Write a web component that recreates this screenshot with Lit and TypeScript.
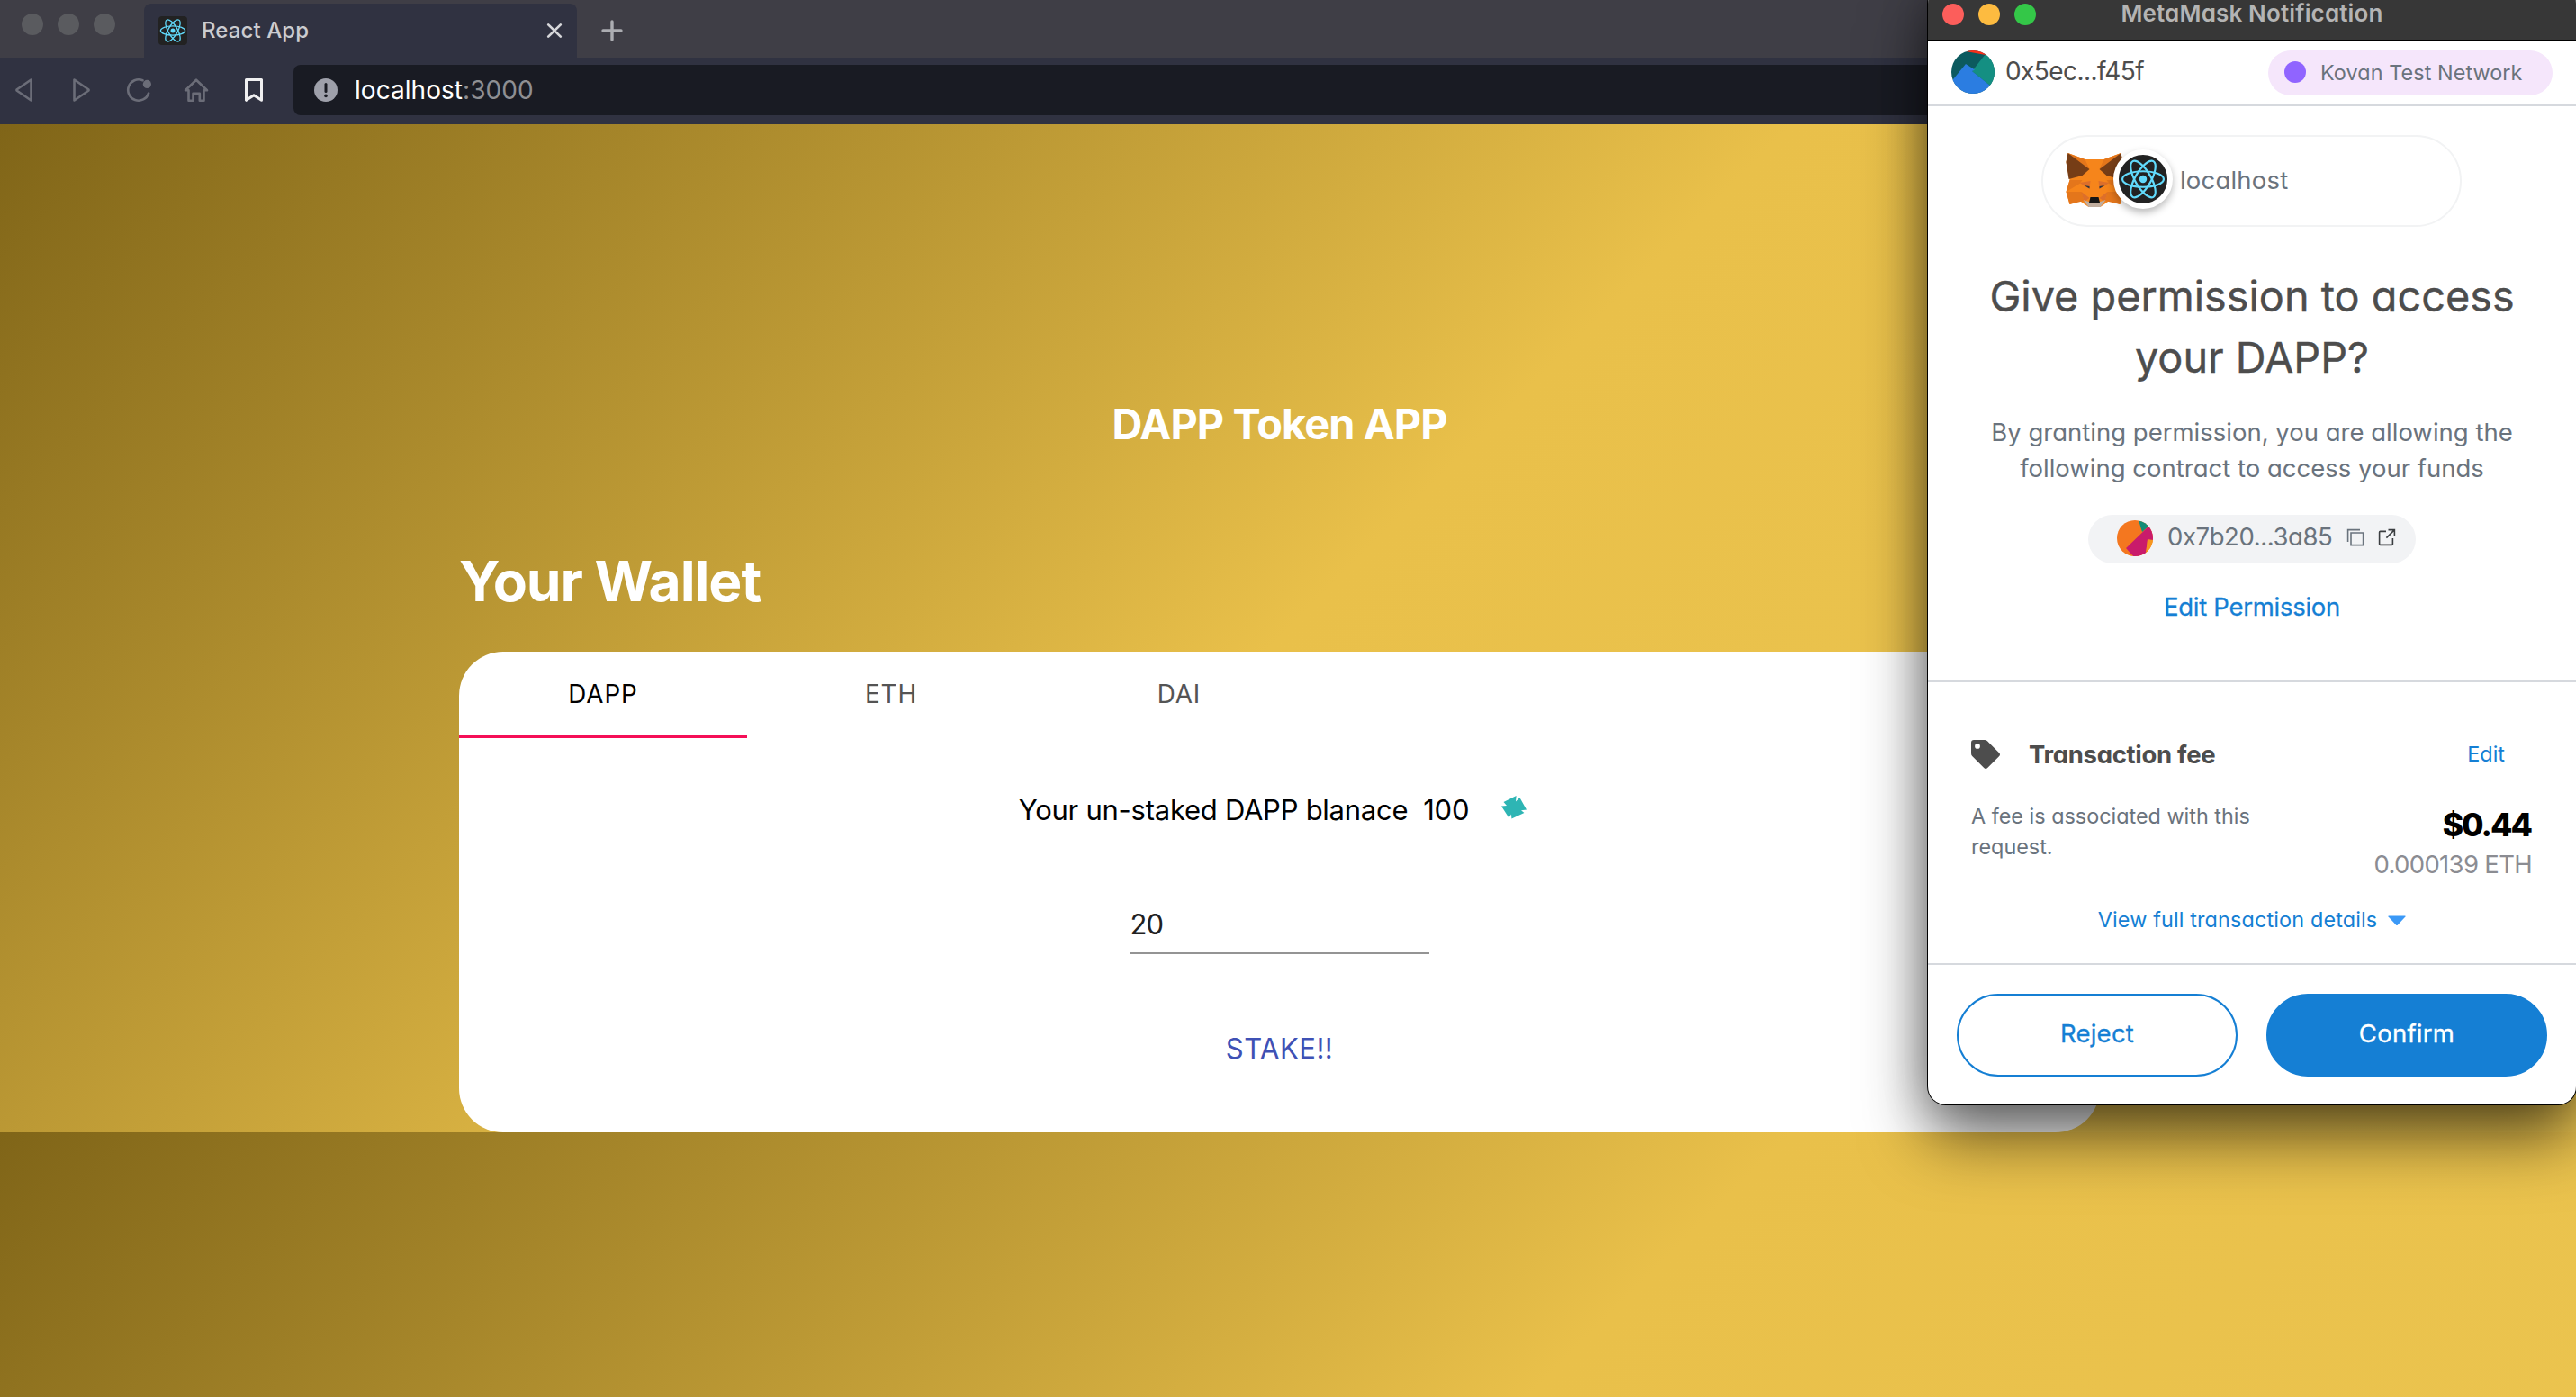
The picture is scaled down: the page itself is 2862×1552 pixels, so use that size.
import { LitElement, html, css, svg } from "lit";
import { customElement } from "lit/decorators.js";

const reactOrbits = svg`
  <g fill="none" stroke="#61dafb" stroke-width="1.3">
    <ellipse rx="13.6" ry="5.2"></ellipse>
    <ellipse rx="13.6" ry="5.2" transform="rotate(60)"></ellipse>
    <ellipse rx="13.6" ry="5.2" transform="rotate(120)"></ellipse>
  </g>
  <circle r="2.5" fill="#61dafb"></circle>`;

@customElement("browser-chrome")
class BrowserChrome extends LitElement {
  static styles = css`
    :host { display: block; height: 138px; background: #303241; }
    .strip { height: 60px; padding-top: 4px; background: #3f3e46; display: flex; }
    .lights { width: 136px; padding: 11px 0 0 24px; display: flex; gap: 16px; }
    .light { width: 24px; height: 24px; border-radius: 50%; background: #5a5b5f; }
    .tab { width: 481px; height: 60px; box-sizing: border-box; padding: 0 16px; border-radius: 8px 8px 0 0; background: #303241; display: flex; align-items: center; }
    .favicon { width: 32px; height: 32px; margin-right: 16px; }
    .name { flex: 1; font-size: 24px; font-weight: 500; line-height: 60px; color: #cbccd0; letter-spacing: 0.1px; }
    .close { width: 18px; height: 18px; }
    .plus { width: 24px; height: 24px; margin: 18px 0 0 27px; }
    .bar { height: 74px; padding: 8px 0 10px 12px; box-sizing: border-box; display: flex; align-items: center; }
    .tools { display: flex; gap: 36px; margin-right: 30px; }
    .tools svg { width: 28px; height: 28px; }
    .url { flex: 1; height: 56px; border-radius: 8px; background: #191b23; display: flex; align-items: center; padding-left: 23px; }
    .url svg { width: 26px; height: 26px; margin-right: 19px; }
    .address { font-size: 28px; line-height: 56px; color: #fff; letter-spacing: 0.05px; }
    .port { color: #8e8f93; }
  `;
  render() {
    return html`
      <div class="strip">
        <div class="lights"><span class="light"></span><span class="light"></span><span class="light"></span></div>
        <div class="tab">
          <svg class="favicon" viewBox="-16 -16 32 32"><rect x="-16" y="-16" width="32" height="32" rx="4" fill="#222"></rect>${reactOrbits}</svg>
          <span class="name">React App</span>
          <svg class="close" viewBox="0 0 18 18"><path d="M2.200 2.400L15.800 15.600M15.800 2.400L2.200 15.600" stroke="#d6d7da" stroke-width="2.7" stroke-linecap="round"></path></svg>
        </div>
        <svg class="plus" viewBox="0 0 24 24"><path d="M12 2V22M2 12H22" stroke="#acadb2" stroke-width="3.4" stroke-linecap="round"></path></svg>
      </div>
      <div class="bar">
        <div class="tools">
          <svg viewBox="0 0 28 28" fill="none" stroke="#6b6d78" stroke-width="2.6" stroke-linejoin="round"><path d="M22.5 2.5V25.5L6.5 14.5V13.5Z"></path></svg>
          <svg viewBox="0 0 28 28" fill="none" stroke="#6b6d78" stroke-width="2.6" stroke-linejoin="round"><path d="M6.5 2.5V25.5L22.5 14.5V13.5Z"></path></svg>
          <svg viewBox="0 0 28 28" fill="none" stroke="#6b6d78" stroke-width="2.6" stroke-linecap="round"><path d="M18.500 3.200A11.700 11.700 0 1 0 25.100 17.500"></path><circle cx="23.4" cy="7.4" r="4.6" fill="#6b6d78" stroke="none"></circle></svg>
          <svg viewBox="0 0 28 28" fill="none" stroke="#6b6d78" stroke-width="2.6" stroke-linejoin="round" stroke-linecap="round"><path d="M2 14.3L14 2.7L26 14.3H22.5V25.7H17.8V17.8H10.5V25.7H5.5V14.3Z"></path></svg>
          <svg viewBox="0 0 28 28" fill="none" stroke="#f0f0f1" stroke-width="3" stroke-linejoin="round"><path d="M5.5 2.5H22.5V25.3L14 19.8L5.5 25.3Z"></path></svg>
        </div>
        <div class="url">
          <svg viewBox="0 0 26 26"><circle cx="13" cy="13" r="13" fill="#9ea0aa"></circle><path d="M13 6.4V14.4" stroke="#191b23" stroke-width="3" stroke-linecap="round"></path><circle cx="13" cy="19.4" r="1.8" fill="#191b23"></circle></svg>
          <span class="address">localhost<span class="port">:3000</span></span>
        </div>
      </div>`;
  }
}

@customElement("wallet-page")
class WalletPage extends LitElement {
  static styles = css`
    :host {
      display: block; height: 1414px; overflow: hidden;
      background: linear-gradient(135deg, #806518 0%, #e9c04a 50%, #ecc651 100%) 0 0 / 100% 1120px repeat-y;
    }
    .inner { width: 1823px; margin-left: 510px; }
    h1 { margin: 0; padding-top: 303px; font-size: 46.8px; line-height: 60px; font-weight: 700; color: #fff; text-align: center; letter-spacing: -0.88px; }
    h2 { margin: 0; padding: 110px 0 0; font-size: 62.3px; line-height: 70px; font-weight: 700; color: #fff; letter-spacing: -1.05px; }
    .card { margin-top: 43px; height: 534px; border-radius: 49px; background: #fff; overflow: hidden; }
    .tabs { display: flex; height: 96px; }
    .tab { width: 320px; height: 96px; box-sizing: border-box; text-align: center; font-size: 27.8px; line-height: 95px; color: #545454; letter-spacing: 0.9px; }
    .tab.on { color: #000; border-bottom: 4px solid #f50f57; }
    .panel { display: flex; flex-direction: column; align-items: center; }
    .balance { display: flex; align-items: center; height: 40px; margin: 60px 0 0 -15px; font-size: 31px; line-height: 40px; color: #000; white-space: pre; letter-spacing: -0.26px; }
    .amount { margin-left: 17px; }
    .token { width: 28px; height: 26px; margin: -6px 0 0 36px; }
    .field { width: 332px; height: 53px; margin-top: 85px; border-bottom: 2px solid #949494; font-size: 31px; line-height: 43px; color: #212121; letter-spacing: -0.9px; }
    .stake { margin-top: 84px; font-size: 31px; line-height: 42px; color: #3f51b5; letter-spacing: 0.5px; }
  `;
  render() {
    return html`
      <div class="inner">
        <h1>DAPP Token APP</h1>
        <h2>Your Wallet</h2>
        <div class="card">
          <div class="tabs"><div class="tab on">DAPP</div><div class="tab">ETH</div><div class="tab">DAI</div></div>
          <div class="panel">
            <div class="balance"><span class="what">Your un-staked DAPP blanace</span><span class="amount">100</span>
              <svg class="token" viewBox="0 0 28 26"><path fill="#2eb5b4" d="M2.5 7L16.6 0L16 6.6L20.4 2L28 15.6L22 16.3L25.4 19L11.4 25.6L11 20.4L8.4 24.4L0 11.6L6 11Z"></path></svg></div>
            <div class="field">20</div>
            <div class="stake">STAKE!!</div>
          </div>
        </div>
      </div>`;
  }
}

@customElement("wallet-popup")
class WalletPopup extends LitElement {
  static styles = css`
    :host {
      display: block; box-sizing: border-box; border-radius: 20px; background: #fff; color: #6a737d;
      box-shadow: 0 0 0 1px #000, 0 36px 72px rgba(0, 0, 0, 0.58), 0 0 50px rgba(0, 0, 0, 0.26);
      font-feature-settings: "cv11" 1; overflow: hidden;
    }
    .title { height: 62px; box-sizing: border-box; background: #373737; border-bottom: 2px solid #000; display: grid; grid-template-columns: 1fr auto 1fr; }
    .title-lights { display: flex; gap: 16px; padding: 20px 0 0 16px; }
    .light { width: 24px; height: 24px; border-radius: 50%; }
    .red { background: #fc5e5b; }
    .amber { background: #fdbb40; }
    .green { background: #34c748; }
    .title-text { font-size: 26px; font-weight: 600; line-height: 61px; color: #b4b4b4; letter-spacing: 0.15px; }
    .head { height: 72px; box-sizing: border-box; border-bottom: 2px solid #d6d9de; padding: 0 26px; display: flex; align-items: center; }
    .avatar { width: 48px; height: 48px; margin: 0 12px 2px 0; }
    .account { flex: 1; font-size: 28px; line-height: 64px; margin-bottom: 5px; color: #4d4d4d; letter-spacing: -0.55px; }
    .network { width: 316px; height: 50px; border-radius: 25px; background: #f5e6fb; box-sizing: border-box; padding: 0 0 2px 18px; display: flex; align-items: center; font-size: 23.4px; letter-spacing: 0.07px; }
    .network-dot { width: 24px; height: 24px; border-radius: 50%; background: #9064ff; margin-right: 16px; }
    .ask { height: 638px; border-bottom: 2px solid #d6d9de; display: flex; flex-direction: column; align-items: center; }
    .site { width: 467px; height: 102px; box-sizing: border-box; margin: 32px 0 43px -1px; border: 2px solid #f2f3f4; border-radius: 51px; display: flex; align-items: center; padding-left: 25px; font-size: 27.5px; letter-spacing: 0.2px; }
    .fox { width: 64px; height: 60px; margin-top: -3px; }
    .badge { width: 54px; height: 54px; border: 6px solid #fff; border-radius: 50%; background: #222; margin: -4px 8px 0 -11px; box-shadow: 0 4px 8px rgba(0, 0, 0, 0.28); }
    .badge svg { width: 54px; height: 54px; display: block; }
    .site-name { margin-top: -2px; }
    .ask-title { font-size: 46.8px; line-height: 68px; color: #4d4d4d; text-align: center; margin-bottom: 29px; -webkit-text-stroke: 0.4px #4d4d4d; }
    .ask-text { font-size: 27.5px; line-height: 40px; text-align: center; margin-bottom: 32px; }
    .contract { width: 364px; height: 54px; border-radius: 27px; background: #f2f3f5; display: flex; align-items: center; box-sizing: border-box; padding-left: 32px; font-size: 27.5px; letter-spacing: -0.42px; margin-bottom: 28px; }
    .contract-icon { width: 40px; height: 40px; margin: -2px 16px 0 0; }
    .contract-name { width: 199px; margin-top: -6px; }
    .glyph { width: 20px; height: 20px; margin: -4px 15px 0 0; }
    .link { color: #157fd4; }
    .edit-permission { font-size: 27.5px; line-height: 40px; letter-spacing: -0.28px; -webkit-text-stroke: 0.3px #157fd4; }
    .fee { height: 314px; box-sizing: border-box; border-bottom: 2px solid #d6d9de; padding: 60px 48px 0; display: flex; flex-direction: column; }
    .fee-head { display: flex; align-items: center; height: 40px; }
    .tag { width: 32px; height: 32px; margin-right: 32px; }
    .fee-title { flex: 1; font-size: 27.5px; font-weight: 700; color: #4d4d4d; letter-spacing: -0.3px; }
    .fee-edit { font-size: 23.4px; margin: -2px 31px 0 0; }
    .fee-body { display: flex; justify-content: space-between; height: 112px; margin-top: 32px; }
    .fee-note { font-size: 23.4px; line-height: 34px; }
    .fee-value { text-align: right; padding-top: 5px; }
    .usd { font-size: 35.5px; line-height: 43px; font-weight: 800; color: #000; letter-spacing: -2px; padding-right: 2px; }
    .eth { font-size: 27.5px; line-height: 44px; color: #8b8c92; letter-spacing: -0.68px; padding-right: 1px; }
    .details { font-size: 23.4px; line-height: 39px; letter-spacing: 0.14px; display: flex; justify-content: center; align-items: center; }
    .caret { width: 20px; height: 12px; margin: 3px 0 0 12px; }
    .actions { padding: 32px; height: 155px; box-sizing: border-box; display: flex; gap: 32px; }
    .button { flex: 1; height: 92px; box-sizing: border-box; border: 2px solid #157fd4; border-radius: 46px; text-align: center; font-size: 27.5px; line-height: 84px; letter-spacing: 0.25px; color: #157fd4; -webkit-text-stroke: 0.3px currentColor; }
    .solid { background: #157fd4; color: #fff; }
  `;
  render() {
    return html`
      <div class="title">
        <div class="title-lights"><span class="light red"></span><span class="light amber"></span><span class="light green"></span></div>
        <span class="title-text">MetaMask Notification</span><span></span>
      </div>
      <div class="head">
        <svg class="avatar" viewBox="0 0 48 48">
          <clipPath id="a"><circle cx="24" cy="24" r="24"></circle></clipPath>
          <g clip-path="url(#a)"><rect width="48" height="48" fill="#0c5a5f"></rect><path fill="#148f82" d="M38 4L23 23L43 39L48 48V0Z"></path><path fill="#2b7de1" d="M-2 37L16 15L26 21.5L23 23L43 39L40 50H-2Z"></path><path fill="#fa2f1a" d="M16 1L38 5L36 0H18Z"></path></g>
        </svg>
        <span class="account">0x5ec...f45f</span>
        <div class="network"><span class="network-dot"></span><span class="network-name">Kovan Test Network</span></div>
      </div>
      <div class="ask">
        <div class="site">
          <svg class="fox" viewBox="0 0 63 60">
            <path fill="#f6851b" d="M2 0L21 7H42L61 0L63 12L59 29L63 43L60 57L48 53L38 60H25L15 53L4 57L0 43L4 30L0 10Z"></path>
            <path fill="#e4761b" d="M2 0L21 7L26 18ZM61 0L42 7L37 18ZM4 30L18 30L15 34L0 43ZM59 30L45 30L48 34L63 43ZM0 43H17L20 53L4 57ZM63 43H46L43 53L60 57Z"></path>
            <path fill="#763d16" d="M2 0L26 18L18 25L3 29L0 10ZM61 0L37 18L45 25L60 29L63 10Z"></path>
            <path fill="#dd6f2a" d="M15 33L27 31L26 40ZM48 33L36 31L37 40ZM17 43L26 50L20 54ZM46 43L37 50L43 54Z"></path>
            <path fill="#2f343b" d="M20 36L26 37V39.5ZM43 36L37 37V39.5Z"></path>
            <path fill="#c0ad9e" d="M19 52L25 54H38L44 52L38 60H25Z"></path>
            <path fill="#161616" d="M27 49H36L37.5 55H25.5Z"></path>
          </svg>
          <div class="badge"><svg viewBox="-16 -16 32 32">${reactOrbits}</svg></div>
          <span class="site-name">localhost</span>
        </div>
        <div class="ask-title">Give permission to access<br>your DAPP?</div>
        <div class="ask-text">By granting permission, you are allowing the<br>following contract to access your funds</div>
        <div class="contract">
          <svg class="contract-icon" viewBox="0 0 40 40">
            <clipPath id="b"><circle cx="20" cy="20" r="20"></circle></clipPath>
            <g clip-path="url(#b)"><rect width="40" height="40" fill="#f4771f"></rect><path fill="#138c77" d="M24 0L28 13L37 5L32 0Z"></path><path fill="#c91b6b" d="M10 31L36 6L42 14V22H34L32 37L20 42Z"></path><path fill="#f6961f" d="M34 21L40 22V32L32 37Z"></path></g>
          </svg>
          <span class="contract-name">0x7b20...3a85</span>
          <svg class="glyph" viewBox="0 0 20 20" fill="none" stroke="#6a737d" stroke-width="1.6"><path d="M1.6 15V1.6H15M5 5H18.6V18.6H5Z"></path></svg>
          <svg class="glyph" viewBox="0 0 20 20" fill="none" stroke="#3a3d40" stroke-width="1.6"><path d="M9 3.4H2.6Q1.6 3.4 1.6 4.4V17.4Q1.6 18.4 2.6 18.4H15.4Q16.4 18.4 16.4 17.4V11M11.5 1.6H18.4V8.5M18.4 1.6L9.4 10.6"></path></svg>
        </div>
        <div class="edit-permission link">Edit Permission</div>
      </div>
      <div class="fee">
        <div class="fee-head">
          <svg class="tag" viewBox="0 0 32 32"><path fill="#4d4d4d" fill-rule="evenodd" d="M3 0H15Q16.600 0 18 1.200L31 14.200Q33 16.200 31 18.200L18.200 31Q16.200 33 14.200 31L1.200 18Q0 16.800 0 15V3Q0 0 3 0ZM7 4A2.900 2.900 0 1 0 7 9.800A2.900 2.900 0 1 0 7 4Z"></path></svg>
          <span class="fee-title">Transaction fee</span>
          <span class="fee-edit link">Edit</span>
        </div>
        <div class="fee-body">
          <div class="fee-note">A fee is associated with this<br>request.</div>
          <div class="fee-value"><div class="usd">$0.44</div><div class="eth">0.000139 ETH</div></div>
        </div>
        <div class="details link"><span>View full transaction details</span><svg class="caret" viewBox="0 0 20 12"><path fill="#3b99f7" d="M1 0.500H19Q20 0.500 19.400 1.600L11 10.600Q10 11.600 9 10.600L0.600 1.600Q0 0.500 1 0.500Z"></path></svg></div>
      </div>
      <div class="actions"><div class="button">Reject</div><div class="button solid">Confirm</div></div>`;
  }
}

@customElement("app-root")
class AppRoot extends LitElement {
  static styles = css`
    :host { display: block; position: relative; width: 2862px; height: 1552px; overflow: hidden; font-family: Inter, "Liberation Sans", sans-serif; }
    .popup { position: absolute; left: 2142px; top: -16px; width: 720px; height: 1243px; }
  `;
  render() {
    return html`<browser-chrome></browser-chrome><wallet-page></wallet-page><wallet-popup class="popup"></wallet-popup>`;
  }
}
